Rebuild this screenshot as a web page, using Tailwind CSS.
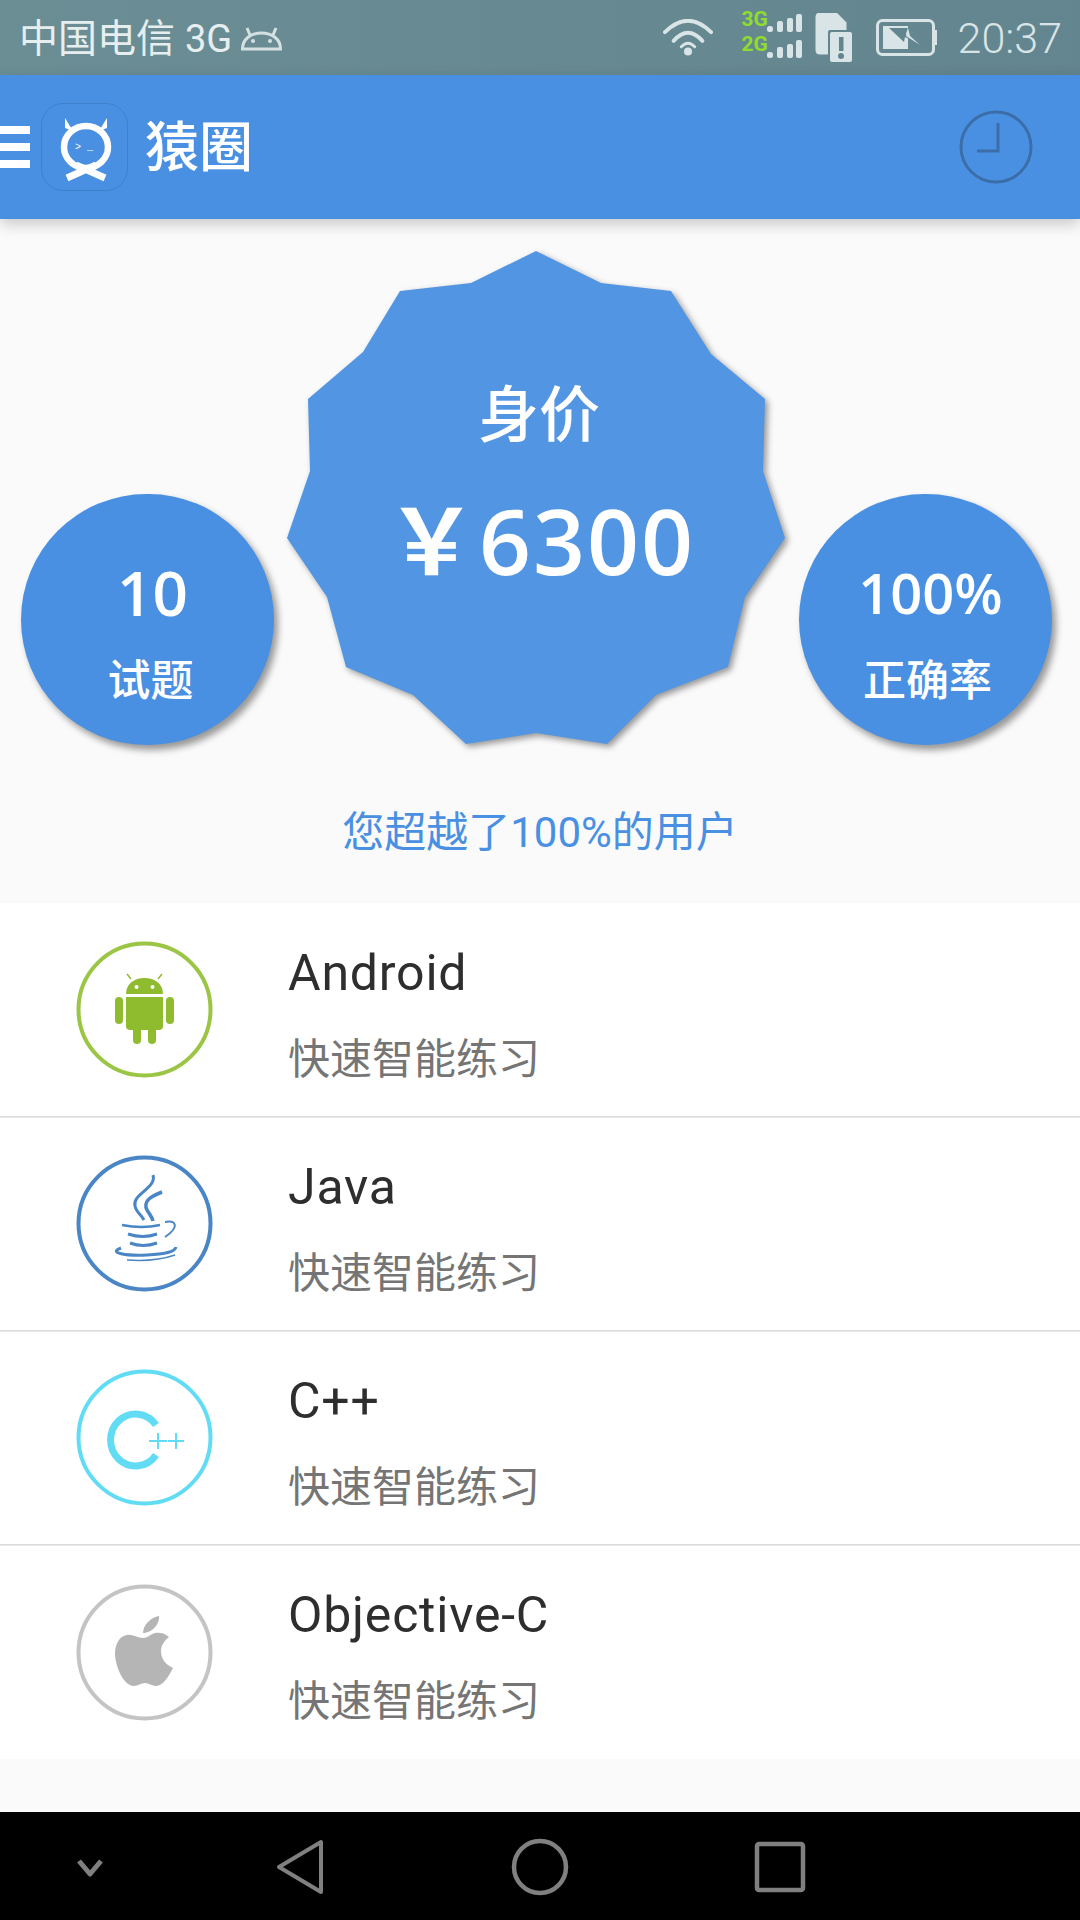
<!DOCTYPE html>
<html lang="zh-CN">
<head>
    <meta charset="UTF-8">
    <meta name="viewport" content="width=device-width, initial-scale=1.0">
    <title>猿圈</title>
    <script src="https://cdn.jsdelivr.net/npm/@tailwindcss/browser@4"></script>
</head>
<body class="bg-[#fafafa]">
<div class="w-[1080px] h-[1920px] flex flex-col overflow-hidden font-['Roboto','Noto_Sans_CJK_SC',sans-serif]">

    <!-- Status bar -->
    <div class="h-[75px] shrink-0 flex items-center pl-[19px] pr-[18px] bg-gradient-to-r from-[#6b8e95] to-[#63858f] text-[#e6eeef]">
        <span class="text-[39px] leading-none mt-[3px]">中国电信</span>
        <span class="text-[38px] leading-none ml-[10px] mt-[3px]">3G</span>
        <svg class="ml-[9px] mt-[1px]" width="41" height="25" viewBox="0 0 41 25" fill="none" stroke="#d5e0e2" stroke-width="3">
            <path d="M1.5 23 H39.5 C39.5 13 31 7 20.5 7 C10 7 1.5 13 1.5 23Z"/>
            <path d="M9 9 L6 2 M32 9 L35 2"/>
            <circle cx="12" cy="15" r="2" fill="#d5e0e2" stroke="none"/>
            <circle cx="29" cy="15" r="2" fill="#d5e0e2" stroke="none"/>
        </svg>

        <svg class="ml-auto" width="50" height="38" viewBox="0 0 52 38" fill="none" stroke="#d8e4e6" stroke-width="4" stroke-linecap="round">
            <path d="M2 13 Q26 -11 50 13"/>
            <path d="M11 22 Q26 5 41 22"/>
            <path d="M19 28 Q26 21 33 28" stroke-width="3"/>
            <circle cx="26" cy="33" r="4.2" fill="#d8e4e6" stroke="none"/>
        </svg>

        <div class="ml-[29px] w-[60px] h-[52px] relative">
            <span class="absolute left-0 top-[-3px] text-[21px] leading-[20px] font-bold text-[#8fdc2f]">3G</span>
            <span class="absolute left-0 top-[22px] text-[21px] leading-[20px] font-bold text-[#8fdc2f]">2G</span>
            <svg class="absolute left-0 top-0" width="60" height="52" viewBox="0 0 60 52" fill="#d8e4e6">
                <rect x="25" y="14" width="6" height="6" rx="2.5"/><rect x="35" y="9" width="6" height="11" rx="2"/><rect x="45" y="6" width="6" height="14" rx="2"/><rect x="54" y="2" width="6" height="18" rx="2"/>
                <rect x="25" y="40" width="6" height="6" rx="2.5"/><rect x="35" y="35" width="6" height="11" rx="2"/><rect x="45" y="32" width="6" height="14" rx="2"/><rect x="54" y="28" width="6" height="18" rx="2"/>
            </svg>
        </div>

        <svg class="ml-[13px]" width="38" height="50" viewBox="0 0 38 50" fill="none">
            <path d="M2 4 Q2 1 5 1 H21 L30 10 V40 H5 Q2 40 2 37Z" stroke="#d8e4e6" stroke-width="3" fill="#d8e4e6"/>
            <path d="M5 5 H20 L27 12 V38 H5Z" fill="#d8e4e6"/>
            <rect x="13" y="17" width="26" height="33" rx="2" fill="#63858f"/>
            <rect x="15" y="19" width="22" height="30" rx="2" fill="#d8e4e6"/>
            <rect x="24" y="24" width="4.5" height="14" fill="#63858f"/>
            <circle cx="26" cy="43" r="3" fill="#63858f"/>
        </svg>

        <svg class="ml-[23px]" width="62" height="38" viewBox="0 0 62 38" fill="none">
            <rect x="1.5" y="1.5" width="56" height="34" rx="5" stroke="#d8e4e6" stroke-width="3"/>
            <rect x="58" y="11" width="3" height="15" fill="#d8e4e6"/>
            <rect x="7" y="7" width="25" height="23" fill="#d8e4e6"/>
            <path d="M13 9 L32 9 L30 15 L43 25 L29 18 L28 23Z" fill="#63858f"/>
            <path d="M32 9 L30 17 L44 26 L34 17Z" fill="#d8e4e6"/>
        </svg>

        <span class="ml-[20px] mt-[1px] text-[43px] leading-none font-light text-[#d8e4e6]">20:37</span>
    </div>

    <!-- App bar -->
    <header class="h-[144px] shrink-0 flex items-center bg-[#4a90e2] relative z-10 shadow-[0_5px_14px_rgba(0,0,0,0.2)]">
        <div class="w-[30px] flex flex-col gap-[9px]">
            <div class="h-[8px] bg-white"></div>
            <div class="h-[8px] bg-white"></div>
            <div class="h-[8px] bg-white"></div>
        </div>
        <div class="ml-[11px] w-[87px] h-[88px] rounded-[22px] border border-[#3f80cc]">
            <svg width="85" height="86" viewBox="0 0 85 86" fill="none" stroke="white">
                <ellipse cx="44" cy="43" rx="22" ry="21" stroke-width="6.5"/>
                <path d="M23 14 L23 24 L31 27Z M65 14 L65 24 L57 27Z" fill="white" stroke="none"/>
                <path d="M25 74 L54 61 M63 74 L34 61" stroke-width="7"/>
                <text x="33" y="46" fill="white" stroke="none" font-size="10" font-family="'Liberation Mono',monospace">&gt; _</text>
            </svg>
        </div>
        <span class="ml-[17px] mt-[3px] text-[54px] leading-none font-medium text-white">猿圈</span>
        <svg class="ml-auto mr-[47px]" width="74" height="74" viewBox="0 0 74 74" fill="none" stroke="#3b6ea8" stroke-width="3">
            <circle cx="37" cy="37" r="35"/>
            <path d="M39 13 V41 H18"/>
        </svg>
    </header>

    <!-- Score -->
    <section class="h-[684px] shrink-0 flex flex-col">
        <div class="flex items-start pt-[32px] pl-[21px] h-[528px]">
            <div class="mt-[243px] w-[253px] h-[251px] shrink-0 rounded-full bg-[#4a90e2] shadow-[4px_5px_7px_rgba(0,0,0,0.4)] flex flex-col items-center text-white font-['Open_Sans','Noto_Sans_CJK_SC',sans-serif]">
                <span class="mt-[62px] ml-[10px] text-[62px] leading-[72px] font-semibold">10</span>
                <span class="mt-[27px] ml-[6px] text-[43px] leading-[50px] font-medium">试题</span>
            </div>
            <div class="relative ml-[13px] w-[498px] h-[493px] shrink-0">
                <svg class="absolute inset-0 drop-shadow-[3px_3px_3px_rgba(0,0,0,0.4)]" width="498" height="493" viewBox="287 251 498 493" fill="#5295e2">
                    <polygon points="536,251 601,283 671,291 711,354 765,399 763,471 785,538 745,597 728,667 656,695 607,744 536,733 466,744 413,695 346,667 327,597 287,538 310,471 308,399 363,352 400,291 471,283"/>
                </svg>
                <div class="relative flex flex-col items-center text-white font-['Open_Sans','Noto_Sans_CJK_SC',sans-serif]">
                    <span class="mt-[127px] ml-[6px] text-[61px] leading-[72px] font-medium">身价</span>
                    <span class="mt-[35px] ml-[9px] text-[91px] leading-[110px] font-semibold tracking-[2px]">￥6300</span>
                </div>
            </div>
            <div class="mt-[243px] ml-[14px] w-[253px] h-[251px] shrink-0 rounded-full bg-[#4a90e2] shadow-[4px_5px_7px_rgba(0,0,0,0.4)] flex flex-col items-center text-white font-['Open_Sans','Noto_Sans_CJK_SC',sans-serif]">
                <span class="mt-[62px] ml-[10px] text-[56px] leading-[72px] font-semibold">100%</span>
                <span class="mt-[27px] ml-[4px] text-[43px] leading-[50px] font-medium">正确率</span>
            </div>
        </div>
        <p class="mt-[61px] text-center text-[42px] leading-[50px] text-[#4a90e2]">您超越了100%的用户</p>
    </section>

    <!-- Subjects -->
    <ul class="shrink-0 bg-white">
        <li class="relative h-[214px] flex items-center border-b border-[#dcdcdc] shadow-[0_1px_0_#e8e8e8]">
            <svg class="ml-[76px] shrink-0 blur-[0.5px]" width="137" height="137" viewBox="-1 -1 137 137" fill="none">
                <circle cx="67.5" cy="67.5" r="66" stroke="#9bc544" stroke-width="4"/>
                <g fill="#8fbc2f">
                    <path d="M49 52 C49 42 57 36 67.5 36 C78 36 86 42 86 52Z"/>
                    <path d="M49 55 H86 V84 Q86 88 82 88 H53 Q49 88 49 84Z"/>
                    <rect x="38" y="55" width="8" height="27" rx="4"/>
                    <rect x="89" y="55" width="8" height="27" rx="4"/>
                    <rect x="56" y="82" width="8" height="20" rx="4"/>
                    <rect x="71" y="82" width="8" height="20" rx="4"/>
                </g>
                <path d="M54 37 L50 32 M81 37 L85 32" stroke="#8fbc2f" stroke-width="1.5"/>
                <circle cx="59.5" cy="45" r="2" fill="white"/>
                <circle cx="75.5" cy="45" r="2" fill="white"/>
            </svg>
            <div class="ml-[75px] pt-[10px] flex flex-col">
                <span class="text-[50px] leading-[56px] tracking-[0.8px] text-[#2e2e2e]">Android</span>
                <span class="mt-[34px] text-[42px] leading-[50px] text-[#757575]">快速智能练习</span>
            </div>
        </li>
        <li class="relative h-[214px] flex items-center border-b border-[#dcdcdc] shadow-[0_1px_0_#e8e8e8]">
            <svg class="ml-[76px] shrink-0 blur-[0.5px]" width="137" height="137" viewBox="-1 -1 137 137" fill="none" stroke="#4a86c5">
                <circle cx="67.5" cy="67.5" r="66" stroke-width="4"/>
                <path d="M76 19 C80 32 55 38 58 50 C59 56 64 58 67 64" stroke-width="3"/>
                <path d="M85 36 C72 41 66 46 70 54 C72 58 75 60 76 65" stroke-width="3.5"/>
                <path d="M45 69 Q65 73 83 69" stroke-width="2.5"/>
                <path d="M88 66 C98 64 104 70 88 81" stroke-width="2"/>
                <path d="M51 78 Q66 83 80 78" stroke-width="3"/>
                <path d="M53 87 Q66 92 80 87" stroke-width="3"/>
                <path d="M44 92 C30 97 50 100 70 99 C88 98 98 96 99 91" stroke-width="3"/>
                <path d="M50 104 Q78 106 98 99" stroke-width="1.5"/>
            </svg>
            <div class="ml-[75px] pt-[10px] flex flex-col">
                <span class="text-[50px] leading-[56px] tracking-[0.8px] text-[#2e2e2e]">Java</span>
                <span class="mt-[34px] text-[42px] leading-[50px] text-[#757575]">快速智能练习</span>
            </div>
        </li>
        <li class="relative h-[214px] flex items-center border-b border-[#dcdcdc] shadow-[0_1px_0_#e8e8e8]">
            <svg class="ml-[76px] shrink-0 blur-[0.5px]" width="137" height="137" viewBox="-1 -1 137 137" fill="none" stroke="#62dcf5">
                <circle cx="67.5" cy="67.5" r="66" stroke-width="4"/>
                <path d="M79 55 A25 26 0 1 0 79 85" stroke-width="7"/>
                <path d="M72 71 H90 M81 63 V79 M91 71 H107 M99 63 V79" stroke-width="2"/>
            </svg>
            <div class="ml-[75px] pt-[10px] flex flex-col">
                <span class="text-[50px] leading-[56px] tracking-[0.8px] text-[#2e2e2e]">C++</span>
                <span class="mt-[34px] text-[42px] leading-[50px] text-[#757575]">快速智能练习</span>
            </div>
        </li>
        <li class="h-[214px] flex items-center">
            <svg class="ml-[76px] shrink-0 blur-[0.5px]" width="137" height="137" viewBox="-1 -1 137 137" fill="none">
                <circle cx="67.5" cy="67.5" r="66" stroke="#c4c4c4" stroke-width="4"/>
                <path fill="#b5b5b5" d="M67 53 C60 53 55 49 50 50 C42 51 38 60 38 68 C38 80 46 101 57 101 C61 101 64 98 68 98 C72 98 75 101 79 101 C86 101 92 91 96 83 C87 79 84 72 84 66 C84 60 88 55 92 52 C88 48 82 47 78 48 C74 49 70 53 67 53Z M66 48 C66 40 74 32 82 31 C83 39 75 48 66 48Z"/>
            </svg>
            <div class="ml-[75px] pt-[10px] flex flex-col">
                <span class="text-[50px] leading-[56px] tracking-[0.8px] text-[#2e2e2e]">Objective-C</span>
                <span class="mt-[34px] text-[42px] leading-[50px] text-[#757575]">快速智能练习</span>
            </div>
        </li>
    </ul>

    <div class="flex-1"></div>

    <!-- Navigation bar -->
    <nav class="h-[108px] shrink-0 bg-black relative">
        <svg class="absolute inset-0" width="1080" height="108" viewBox="0 1812 1080 108" fill="none" stroke="#808080" stroke-linejoin="round">
            <path d="M79 1861 L90 1874 L101 1861" stroke-width="5"/>
            <path d="M321 1842 V1892 L279 1867Z" stroke-width="4"/>
            <circle cx="540" cy="1867" r="26" stroke-width="4.5"/>
            <rect x="757" y="1844" width="46" height="46" rx="2" stroke-width="4.5"/>
        </svg>
    </nav>
</div>
</body>
</html>
